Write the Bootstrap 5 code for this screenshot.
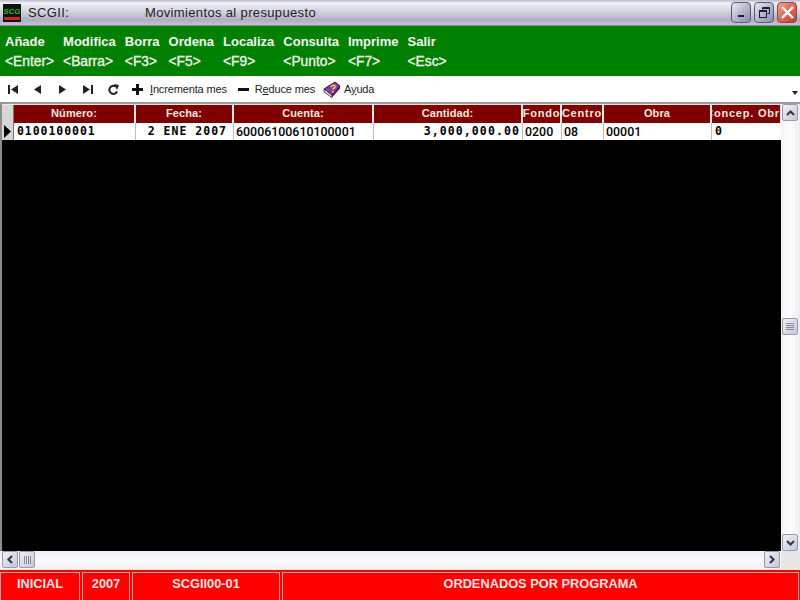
<!DOCTYPE html>
<html lang="es">
<head>
  <meta charset="UTF-8">
  <title>SCGII: Movimientos al presupuesto</title>
  <link href="https://cdn.jsdelivr.net/npm/bootstrap@5.3.3/dist/css/bootstrap.min.css" rel="stylesheet">
  <style>
    body { width: 800px; height: 600px; overflow: hidden; background: #ecebe6; font-family: "Liberation Sans", Arial, sans-serif; }

    /* barra de titulo */
    .titlebar { height: 26px; padding: 0 3px 0 3px; color: #1d1d1d; font-size: 13px; letter-spacing: .35px;
      background: linear-gradient(#b9b9cb 0, #f1f1f6 12%, #d4d4e0 45%, #aeaec2 80%, #c4c4d2 100%); border-bottom: 1px solid #8b8b96; }
    .appname { width: 117px; margin-left: 7px; }
    .winbtn { width: 20px; height: 21px; border: 1px solid #5b5d78; border-radius: 4px; margin-left: 3px;
      background: linear-gradient(135deg, #e9e9f2, #a3a6c0 70%, #8a8dac); }
    .winbtn-close { background: linear-gradient(135deg, #eea08e, #d9634f 60%, #b83f2f); border-color: #8c4a45; }

    /* menu verde */
    .menubar { height: 50px; background: #008000; color: #f2f7ee; font-size: 13px; font-weight: 700; line-height: 19.5px; padding: 6px 0 0 5px; gap: 9px; }
    .menubar .keyname { font-weight: 400; font-size: 13.8px; -webkit-text-stroke: .3px #f2f7ee; }

    /* barra de herramientas */
    .toolbar { height: 26px; background: #fff; font-size: 11px; color: #222; padding-left: 8px; }
    .toolbar svg { flex: none; }
    .toollabel { letter-spacing: -.15px; }
    .overflowmark { width: 0; height: 0; border: 3px solid transparent; border-top: 4px solid #222; border-bottom: 0; margin: 7px 2px 0 auto; }

    /* rejilla */
    .gridarea { height: 449px; border-top: 2px solid #9a9a9a; border-left: 2px solid #8d8d8d; }
    .griddata { width: 779px; background: #000; }
    .gridrow { height: 18px; background: #fff; overflow: hidden; }
    .gridhead { height: 19px; background: #e8e8e8; padding-top: 1px; }
    .gridhead .gcell { display: flex; justify-content: center; background: #800000; color: #f6eadc; font-weight: 700; font-size: 11px; letter-spacing: .1px;
      border-right: 2px solid #e6e6e6; line-height: 17px; }
    .gridhead .widehead { letter-spacing: .8px; }
    .gridbody { border-bottom: 1px solid #000; }
    .gridbody .gcell { border-right: 1px solid #bdbdbd; padding-left: 2px; line-height: 17px; font-family: Roboto, sans-serif; font-weight: 500; font-size: 12.4px; color: #000; }
    .gcell { flex: none; white-space: nowrap; overflow: hidden; }
    .gridbody .monocell { padding-left: 3px; font-family: "DejaVu Sans Mono", monospace; font-weight: 700; font-size: 11.5px; letter-spacing: .95px; }
    .gridbody .col-fec { padding-right: 6px; letter-spacing: 1px; }
    .gridbody .col-can { padding-right: 2px; letter-spacing: 1.1px; }
    .rowmark { width: 12px; background: #d6d6d6; border-right: 1px solid #777; flex: none; }
    .col-num { width: 122px; }
    .col-fec { width: 98px; }
    .col-cta { width: 140px; }
    .col-can { width: 149px; }
    .col-fon { width: 39px; }
    .col-cen { width: 42px; }
    .col-obr { width: 108px; }
    .col-con { width: 70px; }

    /* barras de desplazamiento */
    .vbar { width: 18px; padding-left: 1px; background: linear-gradient(90deg, #f3f3f8, #fdfdfe 50%, #f0f0f5); }
    .hbar { height: 18px; background: linear-gradient(#eeeef3, #fbfbfd 50%, #f0f0f4); padding-left: 2px; margin-bottom: 1px; }
    .sbtn { width: 16px; height: 17px; flex: none; border: 1px solid #9a9aa8; border-radius: 2px; background: linear-gradient(135deg, #eef0f8, #c4c7da); }
    .sthumb-v { height: 17px; margin-top: 197px; margin-bottom: 199px; }
    .sthumb-h { width: 16px; margin-left: 1px; }
    .corner { width: 19px; height: 18px; background: #e6e6e6; flex: none; margin-left: auto; }

    /* barra de estado */
    .statusbar { height: 30px; background: #f00; border-top: 2px solid #f00; padding: 0 1px 0 0; gap: 2px; }
    .statuscell { height: 28px; background: #f00; border: 1px solid #f8a0a0; border-bottom: 0; color: #f6e4e0; font-weight: 700; font-size: 12.8px; line-height: 22px; text-align: center; }
    .st-a { width: 80px; }
    .st-b { width: 48px; }
    .st-c { width: 148px; }
    .st-d { width: 517px; }
  </style>
</head>
<body class="d-flex flex-column">

  <!-- Titulo -->
  <div class="titlebar d-flex align-items-center">
    <svg width="18" height="18" viewBox="0 0 18 18">
      <rect width="18" height="18" fill="#111"/>
      <text x="0.5" y="10" font-family="Liberation Sans" font-size="7.5" font-weight="700" font-style="italic" fill="#2fc22f">SCG</text>
      <rect x="1" y="13" width="16" height="3" fill="#c22"/>
    </svg>
    <span class="appname">SCGII:</span>
    <span>Movimientos al presupuesto</span>
    <div class="d-flex ms-auto">
      <div class="winbtn d-flex align-items-center justify-content-center">
        <svg width="13" height="13" viewBox="0 0 13 13"><rect x="3" y="9" width="6" height="2" fill="#1c1c3a"/></svg>
      </div>
      <div class="winbtn d-flex align-items-center justify-content-center">
        <svg width="13" height="13" viewBox="0 0 13 13" fill="none" stroke="#1c1c3a"><path d="M4.5 3.5V1.5h7v6h-2"/><rect x="1.5" y="4.5" width="7" height="7"/><path d="M1.5 5.5h7M4.5 2.5h7"/></svg>
      </div>
      <div class="winbtn winbtn-close d-flex align-items-center justify-content-center">
        <svg width="15" height="15" viewBox="0 0 15 15" stroke="#fff" stroke-width="2.4"><path d="M2 2l11 11M13 2L2 13"/></svg>
      </div>
    </div>
  </div>

  <!-- Menu -->
  <div class="menubar d-flex">
    <div>Añade<br><span class="keyname">&lt;Enter&gt;</span></div>
    <div>Modifica<br><span class="keyname">&lt;Barra&gt;</span></div>
    <div>Borra<br><span class="keyname">&lt;F3&gt;</span></div>
    <div>Ordena<br><span class="keyname">&lt;F5&gt;</span></div>
    <div>Localiza<br><span class="keyname">&lt;F9&gt;</span></div>
    <div>Consulta<br><span class="keyname">&lt;Punto&gt;</span></div>
    <div>Imprime<br><span class="keyname">&lt;F7&gt;</span></div>
    <div>Salir<br><span class="keyname">&lt;Esc&gt;</span></div>
  </div>

  <!-- Herramientas -->
  <div class="toolbar d-flex align-items-center">
    <svg class="me-3" width="10" height="9" viewBox="0 0 10 9" fill="#222"><rect width="2" height="9"/><path d="M10 0v9L3 4.5z"/></svg>
    <svg width="8" height="9" viewBox="0 0 8 9" fill="#222" style="margin-left:-1px"><path d="M8 0v9L1 4.5z"/></svg>
    <svg width="8" height="9" viewBox="0 0 8 9" fill="#222" style="margin-left:18px"><path d="M0 0v9l7-4.5z"/></svg>
    <svg width="10" height="9" viewBox="0 0 10 9" fill="#222" style="margin-left:16px"><path d="M0 0v9l7-4.5z"/><rect x="8" width="2" height="9"/></svg>
    <svg width="11" height="11" viewBox="0 0 11 11" fill="none" style="margin-left:15px"><path d="M9 7.5A4 4 0 1 1 7.5 2.5" stroke="#222" stroke-width="2"/><path d="M6 0l5 1-2 5z" fill="#222"/></svg>
    <svg width="11" height="11" viewBox="0 0 11 11" fill="#111" style="margin-left:13px"><path d="M4 0h3v4h4v3H7v4H4V7H0V4h4z"/></svg>
    <span class="toollabel" style="margin-left:7px"><u>I</u>ncrementa mes</span>
    <svg width="11" height="3" viewBox="0 0 11 3" fill="#111" style="margin-left:11px"><rect width="11" height="3"/></svg>
    <span class="toollabel" style="margin-left:6px">R<u>e</u>duce mes</span>
    <svg width="18" height="17" viewBox="0 0 18 17" style="margin-left:8px">
      <path d="M1 8L12 1l5 4-8 9z" fill="#8a3fa0" stroke="#2a1238"/>
      <path d="M1 8l8 6v2.500L1 11z" fill="#e8e0d0" stroke="#2a1238" stroke-width=".8"/>
      <path d="M9 14l8-9v2.500l-8 9z" fill="#4d1c60"/>
      <path d="M8 6c1-2.500 4.500-2 4 0-.3 1-2 1.300-2 2.500" fill="none" stroke="#f0d040" stroke-width="1.500"/>
      <circle cx="9.800" cy="10.800" r="1" fill="#f0d040"/>
    </svg>
    <span class="toollabel" style="margin-left:3px">A<u>y</u>uda</span>
    <div class="overflowmark"></div>
  </div>

  <!-- Rejilla -->
  <div class="gridarea d-flex">
    <div class="griddata d-flex flex-column overflow-hidden">
      <div class="gridrow gridhead d-flex">
        <div class="rowmark"></div>
        <div class="gcell col-num">Número:</div>
        <div class="gcell col-fec">Fecha:</div>
        <div class="gcell col-cta">Cuenta:</div>
        <div class="gcell col-can">Cantidad:</div>
        <div class="gcell col-fon widehead">Fondo</div>
        <div class="gcell col-cen widehead">Centro</div>
        <div class="gcell col-obr">Obra</div>
        <div class="gcell col-con widehead">Concep. Obra</div>
      </div>
      <div class="gridrow gridbody d-flex">
        <div class="rowmark d-flex align-items-center justify-content-center">
          <svg width="7" height="13" viewBox="0 0 7 13" fill="#000"><path d="M0 0l7 6.500L0 13z"/></svg>
        </div>
        <div class="gcell col-num monocell">0100100001</div>
        <div class="gcell col-fec monocell text-end">2 ENE 2007</div>
        <div class="gcell col-cta">60006100610100001</div>
        <div class="gcell col-can monocell text-end">3,000,000.00</div>
        <div class="gcell col-fon">0200</div>
        <div class="gcell col-cen">08</div>
        <div class="gcell col-obr">00001</div>
        <div class="gcell col-con monocell">0</div>
      </div>
    </div>
    <div class="vbar d-flex flex-column">
      <div class="sbtn d-flex align-items-center justify-content-center">
        <svg width="9" height="6" viewBox="0 0 9 6" fill="none" stroke="#33334a" stroke-width="2"><path d="M1 5l3.500-3.500L8 5"/></svg>
      </div>
      <div class="sbtn sthumb-v d-flex align-items-center justify-content-center">
        <svg width="8" height="7" viewBox="0 0 8 7" stroke="#8a8a9c"><path d="M0 .5h8M0 2.500h8M0 4.500h8M0 6.500h8"/></svg>
      </div>
      <div class="sbtn d-flex align-items-center justify-content-center">
        <svg width="9" height="6" viewBox="0 0 9 6" fill="none" stroke="#33334a" stroke-width="2"><path d="M1 1l3.500 3.500L8 1"/></svg>
      </div>
    </div>
  </div>

  <div class="hbar d-flex">
    <div class="sbtn d-flex align-items-center justify-content-center">
      <svg width="6" height="9" viewBox="0 0 6 9" fill="none" stroke="#33334a" stroke-width="2"><path d="M5 1L1.500 4.500 5 8"/></svg>
    </div>
    <div class="sbtn sthumb-h d-flex align-items-center justify-content-center">
      <svg width="7" height="8" viewBox="0 0 7 8" stroke="#8a8a9c"><path d="M.5 0v8M2.500 0v8M4.500 0v8M6.500 0v8"/></svg>
    </div>
    <div class="sbtn d-flex align-items-center justify-content-center" style="margin-left:729px">
      <svg width="6" height="9" viewBox="0 0 6 9" fill="none" stroke="#33334a" stroke-width="2"><path d="M1 1l3.500 3.500L1 8"/></svg>
    </div>
    <div class="corner"></div>
  </div>

  <!-- Estado -->
  <div class="statusbar d-flex">
    <div class="statuscell st-a">INICIAL</div>
    <div class="statuscell st-b">2007</div>
    <div class="statuscell st-c">SCGII00-01</div>
    <div class="statuscell st-d">ORDENADOS POR PROGRAMA</div>
  </div>

  <script src="https://cdn.jsdelivr.net/npm/bootstrap@5.3.3/dist/js/bootstrap.bundle.min.js"></script>
</body>
</html>
